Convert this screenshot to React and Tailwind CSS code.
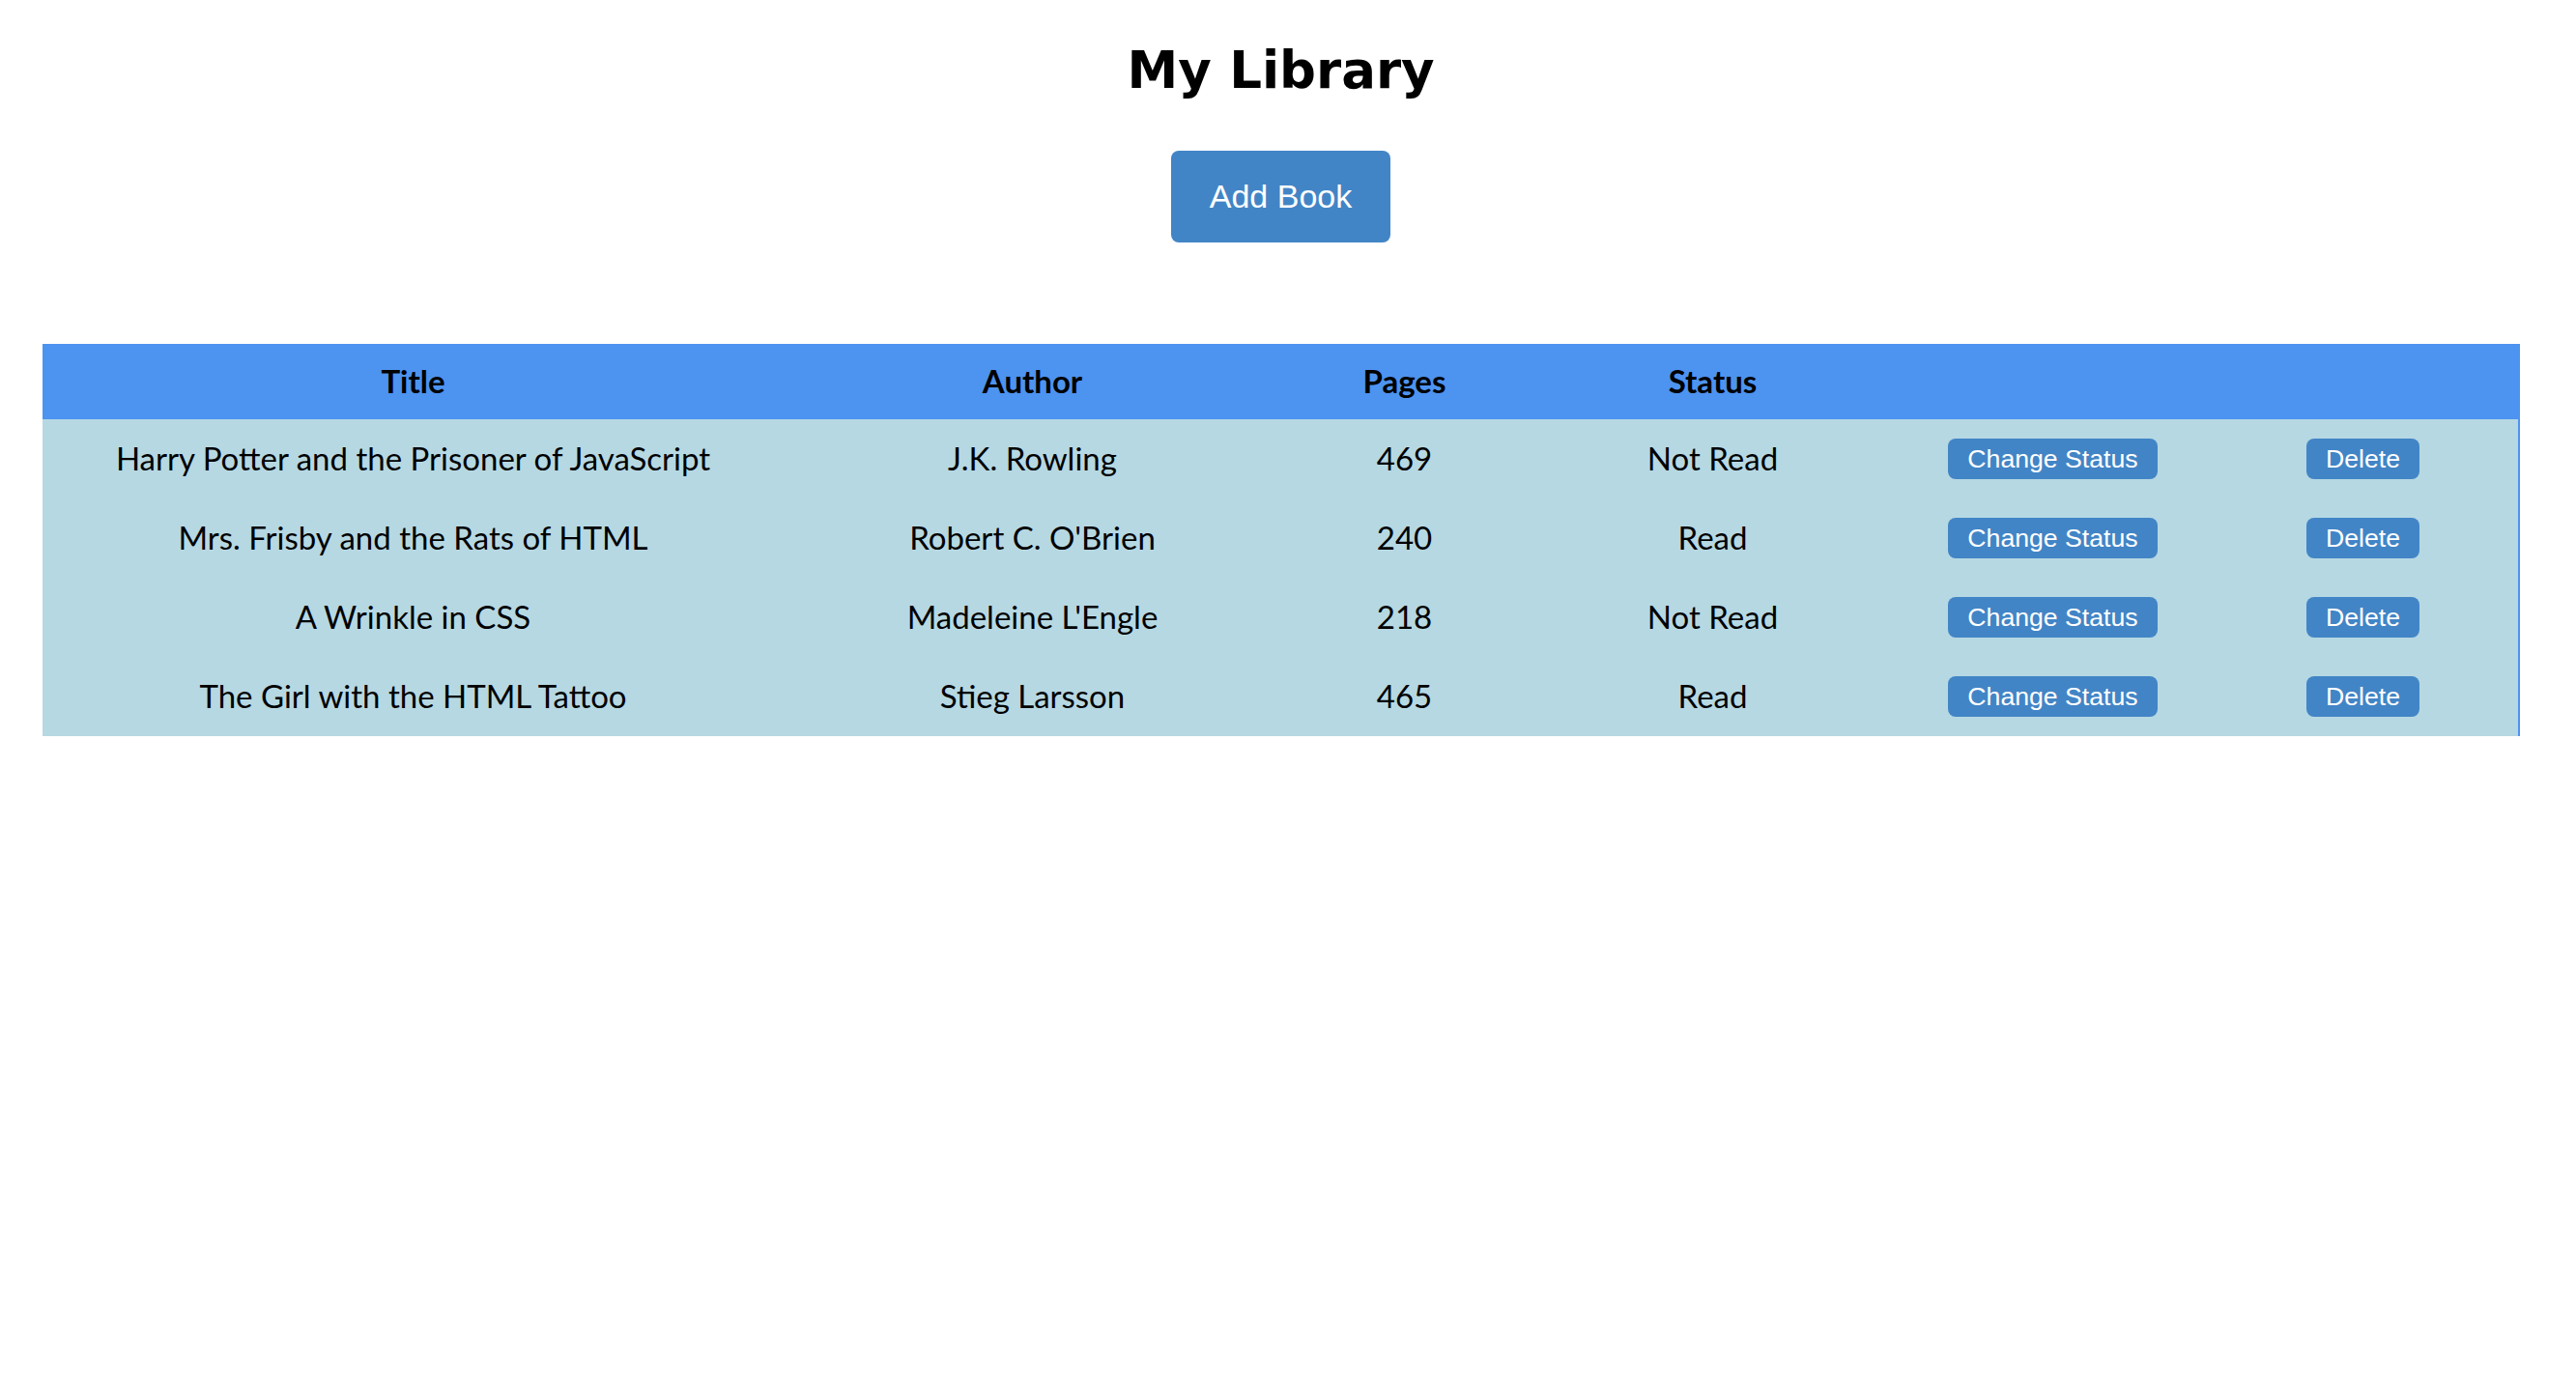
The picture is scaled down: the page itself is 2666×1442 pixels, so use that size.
import React from 'react';

const books = [
  { title: 'Harry Potter and the Prisoner of JavaScript', author: 'J.K. Rowling', pages: 469, read: false },
  { title: 'Mrs. Frisby and the Rats of HTML', author: "Robert C. O'Brien", pages: 240, read: true },
  { title: 'A Wrinkle in CSS', author: "Madeleine L'Engle", pages: 218, read: false },
  { title: 'The Girl with the HTML Tattoo', author: 'Stieg Larsson', pages: 465, read: true },
];

const cols = 'grid grid-cols-[768px_514px_256px_382px_322px_1fr] items-center text-center';

const App = () => {
  return (
    <div className="min-h-screen w-[2651px] bg-white text-black font-['Trebuchet_MS','Lato',sans-serif]">
      <h1 className="pt-[43px] text-center font-['DejaVu_Sans',sans-serif] text-[53px] font-bold leading-[60px]">
        My Library
      </h1>

      <div className="mt-[53px] flex justify-center">
        <button className="h-[95px] rounded-lg bg-[#4285c6] px-10 font-['Liberation_Sans',Arial,sans-serif] text-[34px] text-white">
          Add Book
        </button>
      </div>

      <div className="mx-auto mt-[105px] w-[2564px]">
        <div className={`${cols} h-[78px] bg-[#4d93f0] text-[33px] font-bold`}>
          <div>Title</div>
          <div>Author</div>
          <div>Pages</div>
          <div>Status</div>
          <div></div>
          <div></div>
        </div>
        <div className="border-r-2 border-[#4d93f0] bg-[#b6d8e3]">
          {books.map((b) => (
            <div key={b.title} className={`${cols} h-[82px] text-[33px]`}>
              <div>{b.title}</div>
              <div>{b.author}</div>
              <div>{b.pages}</div>
              <div>{b.read ? 'Read' : 'Not Read'}</div>
              <div className="flex justify-center">
                <button className="h-[42px] rounded-lg bg-[#4285c6] px-5 font-['Liberation_Sans',Arial,sans-serif] text-[26.67px] text-white">
                  Change Status
                </button>
              </div>
              <div className="flex justify-center">
                <button className="h-[42px] rounded-lg bg-[#4285c6] px-5 font-['Liberation_Sans',Arial,sans-serif] text-[26.67px] text-white">
                  Delete
                </button>
              </div>
            </div>
          ))}
        </div>
      </div>
    </div>
  );
};

export default App;
